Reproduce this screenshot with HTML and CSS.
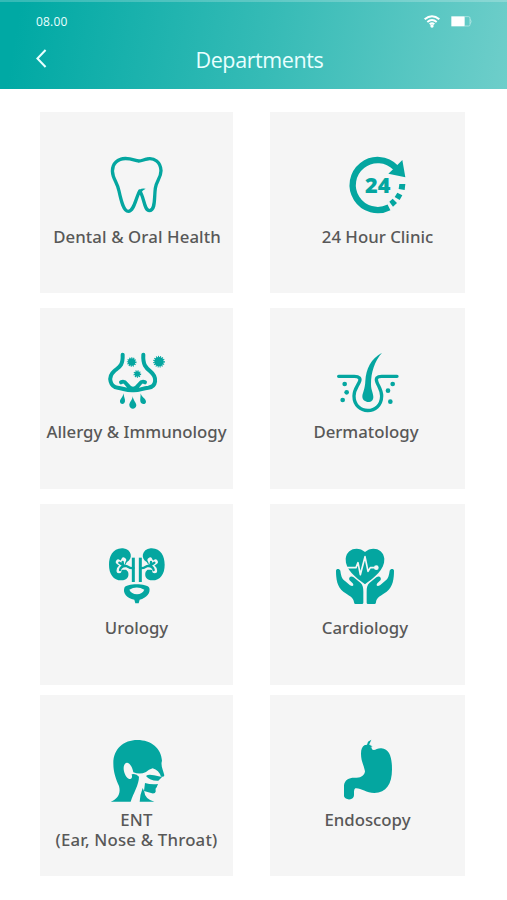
FILE: index.html
```html
<!DOCTYPE html>
<html lang="en">
<head>
<meta charset="utf-8">
<title>Departments</title>
<link rel="stylesheet" href="styles.css">
</head>
<body>
<header class="header">
  <div class="status">
    <span class="time">08.00</span>
    <svg class="wifi" viewBox="0 0 48 39" fill="none" stroke="#fff" stroke-width="6"><path d="M2 13Q24-6 46 13M10 21Q24 9 38 21M17 28Q24 22 31 28"/><circle cx="24" cy="33" r="5" fill="#fff" stroke="none"/></svg>
    <svg class="battery" viewBox="0 0 63 33"><path d="M1 1h40v30H1z" fill="#fff"/><path d="M41 2h12q4 0 4 4v20q0 4-4 4H41M58 10q5 6 0 13" fill="none" stroke="#c5eeec" stroke-width="2"/></svg>
  </div>
  <div class="titlebar">
    <svg class="back" viewBox="0 0 32 56"><path d="M28 3 4 28 28 53" fill="none" stroke="#e9ffff" stroke-width="6"/></svg>
    <h1 class="title">Departments</h1>
  </div>
</header>
<main class="grid">
  <section class="card dental">
    <svg class="icon" viewBox="0 0 285 225"><path d="M145 48C125 43 110 36 91 43C70 50 63 72 70 94C75 109 83 118 87 138C94 170 101 199 115 199C132 199 137 160 149 138C163 156 162 197 178 197C197 197 192 160 196 130C199 108 213 99 213 77C212 52 193 37 171 42C161 44 153 49 145 48" class="line" stroke-width="10"/><path d="M144 145Q147 127 167 131Q158 134 152 145Z"/></svg>
    <h2 class="label">Dental &amp; Oral Health</h2>
  </section>
  <section class="card clinic">
    <svg class="icon" viewBox="0 0 285 225"><path d="M197 68A75 75 0 1 0 177 187" class="line butt" stroke-width="19"/><path d="M217 45 226 97 175 86 190 72Z"/><path d="M208 117h18l-2 18-18-3zM202 143l15 8-8 14-15-9zM188 161l13 13-12 11-11-15z"/><text x="143" y="144" class="hours">24</text></svg>
    <h2 class="label">24 Hour Clinic</h2>
  </section>
  <section class="card allergy">
    <svg class="icon" viewBox="0 0 285 225"><path d="M98 44C99 77 89 80 73 93C51 112 62 141 83 143C101 145 107 152 129 151C150 152 156 144 175 143C199 140 203 112 181 94C168 84 158 74 160 44M93 127C110 117 108 143 129 147C150 143 148 117 165 127" class="line" stroke-width="12"/><circle cx="125" cy="66" r="11"/><circle cx="125" cy="66" r="12" class="burr"/><circle cx="142" cy="102" r="8"/><circle cx="142" cy="102" r="9" class="burr"/><circle cx="207" cy="65" r="14"/><circle cx="207" cy="65" r="15" class="burr"/><path d="M101 160C99 171 89 178 90 185C91 194 104 194 105 184C106 176 101 171 101 160M128 168C128 180 117 187 118 196C119 210 138 210 139 196C139 187 129 181 128 168M152 160C152 172 150 177 151 184C153 195 168 194 168 185C168 176 154 171 152 160"/></svg>
    <h2 class="label">Allergy &amp; Immunology</h2>
  </section>
  <section class="card derm">
    <svg class="icon" viewBox="0 0 285 225"><path d="M41 109H88C103 109 108 116 103 126C96 141 87 149 87 168C87 225 169 227 170 168C170 151 162 142 156 127C151 115 156 109 170 109H216" class="line" stroke-width="10"/><path d="M171 38C138 56 123 86 121 123C120 148 113 157 112 169C111 189 145 194 145 171C145 159 138 151 138 132C138 96 149 64 171 38Z"/><circle cx="59" cy="132" r="7"/><circle cx="65" cy="157" r="7"/><circle cx="53" cy="180" r="7"/><circle cx="203" cy="132" r="7"/><circle cx="189" cy="152" r="7"/><circle cx="196" cy="185" r="7"/></svg>
    <h2 class="label">Dermatology</h2>
  </section>
  <section class="card uro">
    <svg class="icon" viewBox="0 0 285 225"><g id="kidney"><path d="M99 34C68 32 57 59 57 83C57 111 70 130 94 130C110 130 119 119 114 104C105 97 103 84 111 75C130 65 126 37 99 34Z"/><path d="M119 91H105Q99 91 97 85Q96 77 101 69M98 84 85 75M101 91Q87 90 87 101" fill="none" stroke="#f5f5f5" stroke-width="15" stroke-linecap="round"/><path d="M130 62V135" class="line butt" stroke-width="9"/><path d="M130 93C116 96 112 84 105 87Q98 87 98 75M103 87 88 77M105 87Q92 88 90 99" class="line" stroke-width="7"/></g><use href="#kidney" transform="translate(281 0) scale(-1 1)"/><path d="M103 153C107 138 172 138 178 153C182 168 170 183 149 188L146 199H136L133 188C110 184 98 168 103 153Z"/><path d="M118 158Q140 145 163 158Q157 171 141 172Q124 171 118 158Z" fill="#f5f5f5"/></svg>
    <h2 class="label">Urology</h2>
  </section>
  <section class="card cardio">
    <svg class="icon" viewBox="0 0 285 225"><path d="M135 45C116 27 80 33 77 65C75 98 109 122 135 142C161 122 195 98 193 65C190 33 154 27 135 45Z"/><path d="M78 92H108L114 77 121 113 135 59 144 103 151 92H168" fill="none" stroke="#f5f5f5" stroke-width="5" stroke-linejoin="round"/><circle cx="169" cy="92" r="7" fill="#f5f5f5"/><g id="hand"><path d="M48 101C48 94 59 94 61 101C63 113 64 124 75 132L90 145C98 149 103 146 98 139L88 129C85 119 94 116 101 121L121 137C129 144 130 152 130 164V197Q130 201 126 201H106Q102 201 102 196C102 181 85 175 70 164C51 150 48 124 48 101Z"/></g><use href="#hand" transform="translate(270 0) scale(-1 1)"/></svg>
    <h2 class="label">Cardiology</h2>
  </section>
  <section class="card ent">
    <svg class="icon" viewBox="0 0 285 225"><path d="M62 206C80 199 94 184 87 159C78 139 70 119 70 91C70 47 101 21 142 21C184 21 214 46 216 83C211 98 220 112 223 127Q222 133 213 131Q207 112 188 106Q176 110 168 117Q150 126 130 118C127 100 115 83 105 92C96 103 103 130 116 137C124 141 128 135 125 124Q138 120 147 131C147 155 130 180 122 206Z"/><path d="M168 129Q175 122 192 127L216 132 205 143Q180 144 168 129ZM165 150Q182 155 204 153L200 163Q195 166 197 176Q196 182 186 181L162 174ZM158 165 163 176Q164 197 193 206H149Q150 185 158 165Z"/></svg>
    <h2 class="label">ENT<br>(Ear, Nose &amp; Throat)</h2>
  </section>
  <section class="card endo">
    <svg class="icon" viewBox="0 0 285 225"><path d="M118 37 126 35 129 26 139 20 133 34 142 39 140 48C148 56 155 45 169 46C195 48 201 76 201 109C201 153 184 180 148 180C123 180 107 164 91 166C84 172 89 185 86 191C81 203 60 201 57 190V157C59 139 74 133 91 134C108 136 119 126 120 115C116 94 108 85 108 62C108 48 112 41 118 37Z"/><path d="M133 34 142 39 138 45" fill="none" stroke="#f5f5f5" stroke-width="2"/></svg>
    <h2 class="label">Endoscopy</h2>
  </section>
</main>
</body>
</html>
```
FILE: styles.css
```css
* { box-sizing: border-box; }
body { margin: 0; width: 507px; height: 900px; background: #fff; font-family: "Noto Sans", "Open Sans", sans-serif; overflow: hidden; }
.header { height: 88.5px; background: linear-gradient(100deg, #00a9a4 4%, #36bbb6 53%, #6ececa 100%); border-top: 2px solid rgba(255,255,255,.2); color: #e9ffff; }
.status { display: flex; padding: 13px 35px 0 36px; height: 38px; }
.time { font: 12px/14px "Open Sans", sans-serif; margin-right: auto; letter-spacing: .2px; }
.wifi { width: 16px; height: 13px; margin-right: 11px; }
.battery { width: 21px; height: 11px; margin-top: 1px; }
.titlebar { display: flex; align-items: center; padding-left: 36px; height: 40px; }
.back { width: 11px; height: 19px; margin: 0 148.5px 4px 0; }
.title { margin: 0 0 1px; font-family: "Open Sans", sans-serif; font-size: 21.5px; letter-spacing: -.4px; font-weight: 400; line-height: 30px; }
.grid { display: grid; grid-template-columns: 193px 195px; column-gap: 37px; grid-template-rows: 181px 181px 181px 181px; row-gap: 15px; padding: 23.5px 0 0 40px; }
.card { background: #f5f5f5; display: flex; flex-direction: column; align-items: center; padding-top: 33px; }
.icon { width: 95px; height: 75px; flex: none; fill: #04a6a0; align-self: flex-start; margin-left: 50px; }
.line { fill: none; stroke: #04a6a0; stroke-linecap: round; stroke-linejoin: round; }
.butt { stroke-linecap: butt; }
.burr { fill: none; stroke: #04a6a0; stroke-width: 5; stroke-dasharray: 3 3; }
.hours { font: 800 65px "Open Sans", sans-serif; text-anchor: middle; }
.label { margin: 7px 0 0; font-size: 16.8px; font-weight: 500; line-height: 20px; text-align: center; color: #585858; white-space: nowrap; }
.dental .label { letter-spacing: .1px; padding-left: 1px; }
.clinic .icon { margin-left: 59.5px; }
.clinic .label { padding-left: 20px; }
.allergy { padding-top: 32px; }
.derm { padding-top: 32px; }
.derm .icon { margin-left: 55px; }
.derm .label { padding-right: 3px; }
.uro .label, .cardio .label { margin-top: 6px; }
.cardio .label { padding-right: 5px; }
.ent, .endo { margin-top: -5px; height: 181px; padding-top: 38px; }
.ent .label, .endo .label { margin-top: 2px; }
.ent .label { letter-spacing: .2px; }
.endo .icon { margin-left: 55px; }
```
